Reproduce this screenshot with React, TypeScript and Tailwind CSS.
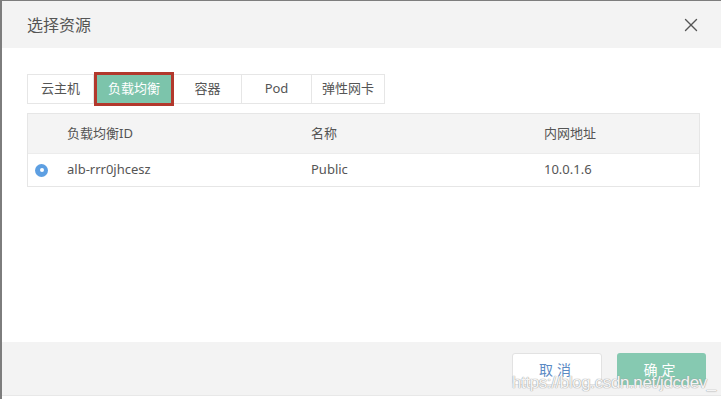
import { X } from "lucide-react";

const tabs = ["云主机", "负载均衡", "容器", "Pod", "弹性网卡"];
const tabWidths = ["w-[67px]", "w-[80px]", "w-[68px]", "w-[70px]", "w-[73px]"];

const App = () => {
  const font = { fontFamily: '"Noto Sans", "Noto Sans CJK SC", sans-serif' };

  return (
    <div
      className="relative w-[721px] h-[399px] flex flex-col border-l-2 border-t border-[#7d7d7d] bg-white text-[#555]"
      style={font}
    >
      {/* header */}
      <div className="h-[47px] bg-[#f3f3f3] flex items-center justify-between pl-[25px] pr-[19px]">
        <span className="text-[16px] text-[#555]">选择资源</span>
        <X className="w-[22px] h-[22px] text-[#555]" strokeWidth={1.5} />
      </div>

      {/* body */}
      <div className="flex-1 pl-[25px] pr-[21px] pt-[26px]">
        <div className="flex">
          {tabs.map((t, i) =>
            i === 1 ? (
              <div
                key={t}
                className={`${tabWidths[i]} h-[34px] -my-[2px] flex items-center justify-center bg-[#7cc4ab] text-white text-[13px] border-[3px] border-[#b2382c]`}
              >
                {t}
              </div>
            ) : (
              <div
                key={t}
                className={`${tabWidths[i]} h-[30px] flex items-center justify-center text-[13px] text-[#555] border border-[#e6e6e6] ${i > 1 ? "border-l-0" : ""}`}
              >
                {t}
              </div>
            )
          )}
        </div>

        <div className="mt-[9px] border border-[#e6e6e6] text-[13px]">
          <div className="h-[39px] bg-[#f4f4f4] flex items-center">
            <div className="w-[39px]" />
            <div className="w-[244px]">负载均衡ID</div>
            <div className="w-[233px]">名称</div>
            <div>内网地址</div>
          </div>
          <div className="h-[33px] flex items-center border-t border-[#ececec]">
            <div className="w-[39px] flex pl-[7px]">
              <div className="w-[13px] h-[13px] rounded-full bg-[#5d9fe2] flex items-center justify-center">
                <div className="w-[4px] h-[4px] rounded-full bg-white" />
              </div>
            </div>
            <div className="w-[244px]">alb-rrr0jhcesz</div>
            <div className="w-[233px]">Public</div>
            <div>10.0.1.6</div>
          </div>
        </div>
      </div>

      {/* footer */}
      <div className="h-[53px] bg-[#f3f3f3] flex items-start justify-end gap-[15px] pt-[11px] pr-[15px]">
        <button className="w-[90px] h-[32px] bg-white border border-[#e2e2e2] rounded-[3px] text-[14px] text-[#5b8ac4] tracking-[4px]">
          取消
        </button>
        <button className="w-[89px] h-[32px] bg-[#86c9b1] rounded-[3px] text-[14px] text-white tracking-[4px]">
          确定
        </button>
      </div>
      <div className="h-[4px] bg-white border-t border-[#e8e8e8]" />

      {/* watermark */}
      <div
        className="absolute left-[510px] top-[373px] text-[17px] leading-none text-white/90 tracking-[-0.4px]"
        style={{ fontFamily: '"Liberation Sans", Arial, sans-serif', textShadow: "0 0 1px #9a9a9a, 0 0 1px #9a9a9a" }}
      >
        https://blog.csdn.net/jdcdev_
      </div>
    </div>
  );
};

export default App;
